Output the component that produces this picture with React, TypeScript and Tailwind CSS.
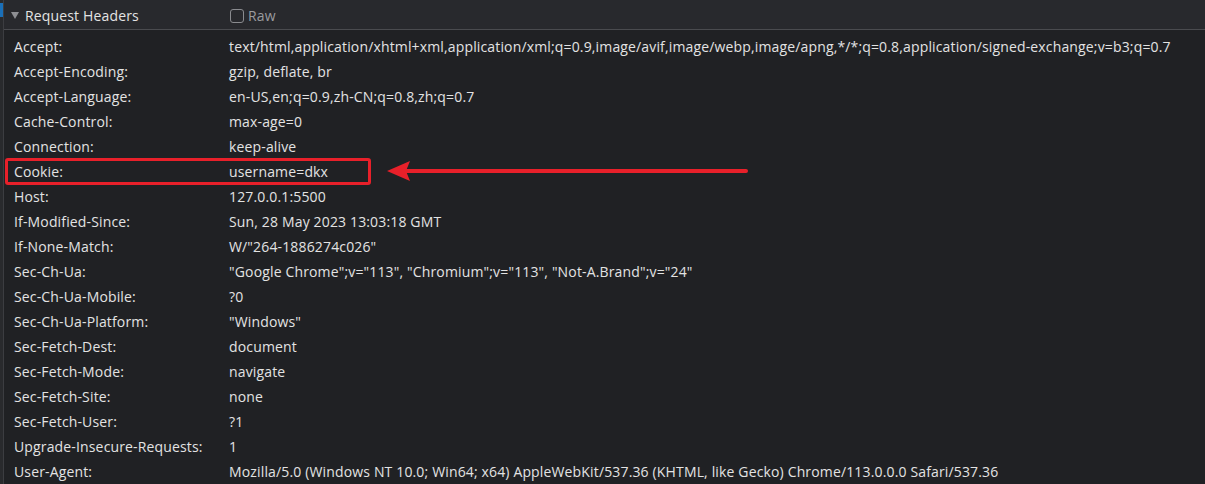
import { useState } from 'react';

const headers: [string, string][] = [
    ['Accept:', 'text/html,application/xhtml+xml,application/xml;q=0.9,image/avif,image/webp,image/apng,*/*;q=0.8,application/signed-exchange;v=b3;q=0.7'],
    ['Accept-Encoding:', 'gzip, deflate, br'],
    ['Accept-Language:', 'en-US,en;q=0.9,zh-CN;q=0.8,zh;q=0.7'],
    ['Cache-Control:', 'max-age=0'],
    ['Connection:', 'keep-alive'],
    ['Cookie:', 'username=dkx'],
    ['Host:', '127.0.0.1:5500'],
    ['If-Modified-Since:', 'Sun, 28 May 2023 13:03:18 GMT'],
    ['If-None-Match:', 'W/"264-1886274c026"'],
    ['Sec-Ch-Ua:', '"Google Chrome";v="113", "Chromium";v="113", "Not-A.Brand";v="24"'],
    ['Sec-Ch-Ua-Mobile:', '?0'],
    ['Sec-Ch-Ua-Platform:', '"Windows"'],
    ['Sec-Fetch-Dest:', 'document'],
    ['Sec-Fetch-Mode:', 'navigate'],
    ['Sec-Fetch-Site:', 'none'],
    ['Sec-Fetch-User:', '?1'],
    ['Upgrade-Insecure-Requests:', '1'],
    ['User-Agent:', 'Mozilla/5.0 (Windows NT 10.0; Win64; x64) AppleWebKit/537.36 (KHTML, like Gecko) Chrome/113.0.0.0 Safari/537.36'],
];

function Arrow() {
    return (
        <svg
            className="pointer-events-none absolute left-[378px] top-[-1px]"
            width="366"
            height="26"
            viewBox="0 0 366 26"
        >
            <line x1="18" y1="13" x2="362" y2="13" stroke="#e8202a" strokeWidth="4" strokeLinecap="round" />
            <path d="M3 13 L26 3 L22 13 L26 23 Z" fill="#e8202a" />
        </svg>
    );
}

export default function App() {
    const [raw, setRaw] = useState(false);

    return (
        <div className="flex h-[484px] w-[1205px] overflow-hidden bg-[#202124] font-['Open_Sans',sans-serif] text-[14px] tracking-[0.15px] text-[#e3e3e3]">
            <div className="flex w-[3px] flex-col bg-[#292a2d]">
                <div className="mt-[3px] h-[14px] bg-[#1a6fb8]" />
            </div>
            <div className="w-px bg-[#3c3d41]" />
            <div className="flex flex-1 flex-col">
                <div className="flex h-[33px] items-center border-b border-[#4a4b4f] bg-[#28292d] pt-[2px]">
                    <svg className="ml-[7px] mr-[6px]" width="8" height="7" viewBox="0 0 8 7">
                        <path d="M0 0 H8 L4 7 Z" fill="#8e8f93" />
                    </svg>
                    <span className="w-[205px]">Request Headers</span>
                    <label className="flex items-center gap-[4px] text-[#9a9b9f]">
                        <input
                            type="checkbox"
                            checked={raw}
                            onChange={() => setRaw(!raw)}
                            className="h-[14px] w-[14px] appearance-none rounded-[3px] border border-[#8a8b8f] bg-transparent"
                        />
                        Raw
                    </label>
                </div>
                <div className="flex flex-col pt-[4px]">
                    {headers.map(([name, value]) => {
                        const cookie = name === 'Cookie:';
                        return (
                            <div
                                key={name}
                                className={`relative flex h-[25px] items-center whitespace-nowrap ${cookie ? 'ml-[2px] w-[364px] rounded-[2px] outline-[3px] outline-[#e8202a] outline-solid -outline-offset-[2px]' : ''}`}
                            >
                                <span className={`shrink-0 ${cookie ? 'w-[223px] pl-[8px]' : 'w-[225px] pl-[10px]'}`}>
                                    {name}
                                </span>
                                <span>{value}</span>
                                {cookie && <Arrow />}
                            </div>
                        );
                    })}
                </div>
            </div>
        </div>
    );
}
